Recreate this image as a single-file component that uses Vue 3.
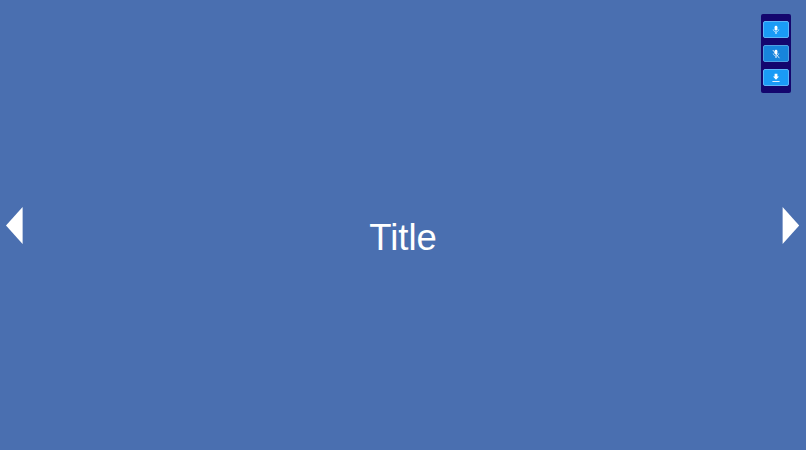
<script setup>
const tools = [
  { id: 'mic', label: 'Microphone', active: false },
  { id: 'mute', label: 'Mute microphone', active: true },
  { id: 'download', label: 'Download', active: false }
]
</script>

<template>
  <main class="stage">
    <h1 class="title">Title</h1>

    <button class="arrow arrow-left" aria-label="Previous">
      <svg width="18" height="38" viewBox="0 0 18 38"><path d="M16.6 0V37L0 18.5Z" fill="#fff" /></svg>
    </button>
    <button class="arrow arrow-right" aria-label="Next">
      <svg width="18" height="38" viewBox="0 0 18 38"><path d="M0.6 0V37L17.2 18.5Z" fill="#fff" /></svg>
    </button>

    <div class="toolbar">
      <button
        v-for="tool in tools"
        :key="tool.id"
        class="tool"
        :class="{ active: tool.active }"
        :aria-label="tool.label"
      >
        <svg v-if="tool.id !== 'download'" width="10" height="10" viewBox="0 0 10 10">
          <rect x="3.6" y="0.8" width="2.8" height="4.8" rx="1.4" fill="#fff" />
          <path d="M2.2 4.4C2.4 7.6 7.6 7.6 7.8 4.4" fill="none" stroke="#fff" stroke-opacity="0.75" stroke-width="0.8" />
          <path d="M5 7V9" fill="none" stroke="#fff" stroke-width="1" />
          <path v-if="tool.id === 'mute'" d="M1.8 1L8.4 9.2" stroke="#fff" stroke-opacity="0.9" stroke-width="0.9" />
        </svg>
        <svg v-else width="10" height="10" viewBox="0 0 10 10">
          <path d="M3.6 0.8H6.4V3.6H8L5 6.8L2 3.6H3.6Z" fill="#fff" />
          <rect x="1.4" y="8" width="7.2" height="1" fill="#fff" fill-opacity="0.85" />
        </svg>
      </button>
    </div>
  </main>
</template>

<style scoped>
.stage {
  position: relative;
  width: 806px;
  height: 450px;
  display: flex;
  align-items: center;
  justify-content: center;
  background: #4a6fb0;
  overflow: hidden;
  font-family: "Liberation Sans", Arial, sans-serif;
}
.title {
  margin: 26px 0 0;
  color: #fff;
  font-size: 36.5px;
  font-weight: 400;
  line-height: 1;
}
.arrow {
  position: absolute;
  top: 207px;
  display: flex;
  padding: 0;
  border: 0;
  background: none;
}
.arrow-left { left: 6px; }
.arrow-right { right: 6px; }
.toolbar {
  position: absolute;
  top: 14px;
  left: 761px;
  width: 30px;
  box-sizing: border-box;
  display: flex;
  flex-direction: column;
  align-items: center;
  gap: 7px;
  padding: 7px 0;
  background: #14066e;
  border-radius: 2px;
}
.tool {
  width: 26px;
  height: 17px;
  display: flex;
  align-items: center;
  justify-content: center;
  padding: 0;
  box-sizing: border-box;
  border: 1px solid #5cb6f8;
  border-radius: 2px;
  background: #1a9bf6;
}
.tool.active {
  background: #1784dc;
  border-color: #4f9fe0;
}
</style>

<style>
html, body { margin: 0; background: #4a6fb0; }
</style>
